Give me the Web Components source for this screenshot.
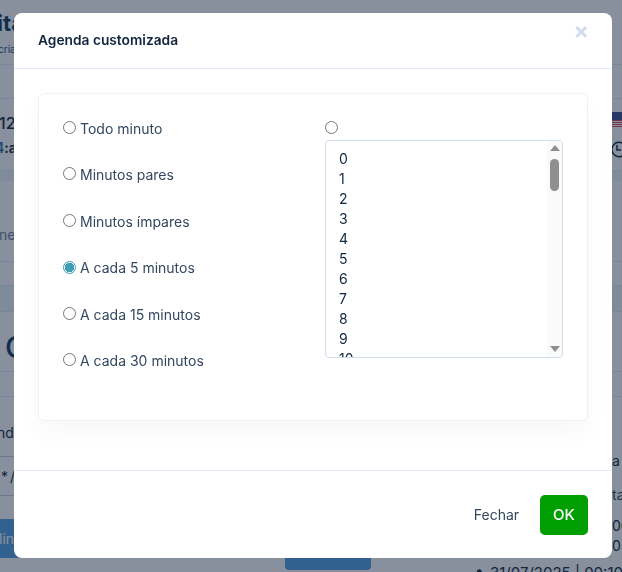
<!DOCTYPE html>
<html lang="pt">
<head>
<meta charset="utf-8">
<title>Agenda customizada</title>
<style>
  html, body { margin: 0; height: 100%; overflow: hidden; background: #fff; }
  body { font-family: Inter, "Liberation Sans", sans-serif; color: #12263f; }
</style>
</head>
<body>

<page-behind>
  <bg-col slot="left">
    <bg-row h="3"></bg-row>
    <bg-row h="62" line>
      <div style="font:700 22px/24px Inter,sans-serif;color:#0f3a63;margin-top:8px;margin-left:-3px">ita</div>
      <div style="font-size:10px;line-height:14px;color:#1e4e7e;margin-top:7px;margin-left:-2px">cria</div>
    </bg-row>
    <bg-row h="34" line></bg-row>
    <bg-row h="72" line>
      <div style="font:500 16px/20px Inter,sans-serif;margin-top:14px;margin-left:-1px">12</div>
      <div style="font:600 14px/20px Inter,sans-serif;margin-top:5px;margin-left:-5px"><span style="color:#2c6fa8">4</span>:a</div>
    </bg-row>
    <bg-row h="10" band></bg-row>
    <bg-row h="81" line>
      <div style="font-size:14px;line-height:18px;color:#6e84a3;margin-top:45px;margin-left:-1px">ne</div>
    </bg-row>
    <bg-row h="24" line></bg-row>
    <bg-row h="26" band line></bg-row>
    <bg-row h="60" line>
      <div style="font:500 30px/34px Inter,sans-serif;margin-top:18px;margin-left:5px;color:#0f3a63">C</div>
    </bg-row>
    <bg-row h="25" line></bg-row>
    <bg-row h="60" line style="border-color:#c3d0e0">
      <div style="font-size:14px;line-height:18px;margin-top:27px;margin-left:-3px">nda</div>
    </bg-row>
    <bg-row h="39" line style="border-color:#c3d0e0">
      <div style="font-size:14px;line-height:20px;margin-top:10px;margin-left:1px;letter-spacing:2px">*/</div>
    </bg-row>
    <bg-row h="23"></bg-row>
    <bg-button w="60" h="39" label="lin" style="margin-left:-1px"></bg-button>
  </bg-col>

  <bg-col slot="center">
    <bg-button w="86" h="12" style="border-radius:0 0 4px 4px"></bg-button>
  </bg-col>

  <bg-col slot="right">
    <bg-row h="3"></bg-row>
    <bg-row h="62" line></bg-row>
    <bg-row h="34" line></bg-row>
    <bg-row h="72" line>
      <flag-icon style="margin:13px 0 0 612px"></flag-icon>
      <clock-icon style="margin:14px 0 0 611px"></clock-icon>
    </bg-row>
    <bg-row h="10" band></bg-row>
    <bg-row h="81" line></bg-row>
    <bg-row h="24" line></bg-row>
    <bg-row h="26" band line></bg-row>
    <bg-row h="60" line></bg-row>
    <bg-row h="25" line></bg-row>
    <bg-row h="176">
      <div style="font-size:14px;line-height:18px;margin:55px 0 0 612px">a</div>
      <div style="font-size:14px;line-height:18px;margin:16px 0 0 612px;color:#33475f">ta</div>
      <div style="font-size:14px;line-height:20px;margin:12px 0 0 612px">00</div>
      <div style="font-size:14px;line-height:20px;margin:0 0 0 612px">05</div>
      <div style="font-size:15px;line-height:18px;margin:8px 0 0 490px;white-space:nowrap;position:relative"><span style="position:absolute;left:-15px;top:-2px">•</span>31/07/2025 | 00:10</div>
    </bg-row>
  </bg-col>
</page-behind>

<modal-dialog heading="Agenda customizada">
  <opt-card>
    <radio-row slot="first">Todo minuto</radio-row>
    <radio-row slot="first" tall>Minutos pares</radio-row>
    <radio-row slot="first" tall>Minutos ímpares</radio-row>
    <radio-row slot="first" checked>A cada 5 minutos</radio-row>
    <radio-row slot="first">A cada 15 minutos</radio-row>
    <radio-row slot="first">A cada 30 minutos</radio-row>
    <radio-row slot="second" bare></radio-row>
    <list-box slot="second" count="11"></list-box>
  </opt-card>
  <foot-button slot="footer">Fechar</foot-button>
  <foot-button slot="footer" kind="ok">OK</foot-button>
</modal-dialog>

<script>
class PageBehind extends HTMLElement {
  constructor() {
    super();
    this.attachShadow({ mode: 'open' }).innerHTML = `
      <style>
        :host { display: grid; grid-template-columns: 285px 190px 1fr; width: 622px; height: 572px; overflow: hidden; background: #fff; }
        .c { min-width: 0; }
        .l { overflow: hidden; }
        .m { padding-top: 558px; }
        .r { margin-left: -475px; width: 622px; }
      </style>
      <div class="c l"><slot name="left"></slot></div>
      <div class="c m"><slot name="center"></slot></div>
      <div class="c r"><slot name="right"></slot></div>
    `;
  }
}

class BgCol extends HTMLElement {
  constructor() {
    super();
    this.attachShadow({ mode: 'open' }).innerHTML = `
      <style>:host { display: flex; flex-direction: column; }</style>
      <slot></slot>
    `;
  }
}

class BgRow extends HTMLElement {
  constructor() {
    super();
    this.attachShadow({ mode: 'open' }).innerHTML = `
      <style>
        :host { display: flex; flex-direction: column; box-sizing: border-box; flex: none; overflow: hidden; }
        :host([line]) { border-bottom: 1px solid #e3ebf6; }
        :host([band]) { background: #f1f4f8; }
      </style>
      <slot></slot>
    `;
  }
  connectedCallback() {
    this.style.height = this.getAttribute('h') + 'px';
  }
}

class BgButton extends HTMLElement {
  constructor() {
    super();
    this.attachShadow({ mode: 'open' }).innerHTML = `
      <style>
        :host { display: flex; align-items: center; flex: none; background: #559fe5; border-radius: 0 4px 4px 0; color: #fff; font-size: 14px; overflow: hidden; }
      </style>
      <span></span>
    `;
  }
  connectedCallback() {
    this.style.width = this.getAttribute('w') + 'px';
    this.style.height = this.getAttribute('h') + 'px';
    this.shadowRoot.querySelector('span').textContent = this.getAttribute('label') || '';
  }
}

class FlagIcon extends HTMLElement {
  constructor() {
    super();
    this.attachShadow({ mode: 'open' }).innerHTML = `
      <style>:host { display: block; width: 10px; height: 15px; line-height: 0; }</style>
      <svg width="10" height="15" viewBox="0 0 10 15">
        <rect width="10" height="15" fill="#fff"/>
        <g fill="#d8485a">
          <rect y="0" width="10" height="1"/><rect y="2" width="10" height="1"/>
          <rect y="4" width="10" height="1"/><rect y="6" width="10" height="1"/>
          <rect y="8" width="10" height="1"/><rect y="10" width="10" height="1"/>
          <rect y="12" width="10" height="1"/><rect y="14" width="10" height="1"/>
        </g>
        <rect width="10" height="8" fill="#3c4f8c"/>
      </svg>
    `;
  }
}

class ClockIcon extends HTMLElement {
  constructor() {
    super();
    this.attachShadow({ mode: 'open' }).innerHTML = `
      <style>:host { display: block; width: 16px; height: 17px; line-height: 0; }</style>
      <svg width="16" height="17" viewBox="0 0 16 17" fill="none" stroke="#12263f" stroke-width="1.5" stroke-linecap="round">
        <circle cx="8" cy="8.5" r="7.2"/>
        <path d="M6 4.5v4.5h3.5"/>
      </svg>
    `;
  }
}

class ModalDialog extends HTMLElement {
  constructor() {
    super();
    this.attachShadow({ mode: 'open' }).innerHTML = `
      <style>
        :host { position: fixed; inset: 0; display: block; background: rgba(15, 33, 57, .5); }
        .dialog { position: absolute; left: 14px; top: 13px; width: 598px; height: 545px; box-sizing: border-box; background: #fff; border-radius: 8px; display: flex; flex-direction: column; overflow: hidden; }
        header { flex: none; height: 56px; box-sizing: border-box; border-bottom: 1px solid #e3ebf6; display: flex; justify-content: space-between; padding: 0 24px; }
        h5 { margin: 17px 0 0; font: 600 13.75px/20px Inter, "Liberation Sans", sans-serif; color: #12263f; }
        .close { margin: 7px -1px 0 0; font: 700 23px/22px Inter, "Liberation Sans", sans-serif; color: #d2ddec; }
        main { flex: 1; padding: 24px; }
        footer { flex: none; height: 88px; box-sizing: border-box; border-top: 1px solid #e3ebf6; display: flex; align-items: center; justify-content: flex-end; gap: 9px; padding: 0 24px 0; }
      </style>
      <div class="dialog">
        <header>
          <h5></h5>
          <div class="close">×</div>
        </header>
        <main><slot></slot></main>
        <footer><slot name="footer"></slot></footer>
      </div>
    `;
  }
  connectedCallback() {
    this.shadowRoot.querySelector('h5').textContent = this.getAttribute('heading');
  }
}

class OptCard extends HTMLElement {
  constructor() {
    super();
    this.attachShadow({ mode: 'open' }).innerHTML = `
      <style>
        :host { display: block; height: 328px; box-sizing: border-box; border: 1px solid #edf2f9; border-radius: 6px; background: #fff; box-shadow: 0 12px 24px rgba(18, 38, 63, .03); padding: 24px; }
        .row { display: grid; grid-template-columns: 1fr 1fr; gap: 24px; }
        .col { display: flex; flex-direction: column; min-width: 0; }
      </style>
      <div class="row">
        <div class="col"><slot name="first"></slot></div>
        <div class="col"><slot name="second"></slot></div>
      </div>
    `;
  }
}

class RadioRow extends HTMLElement {
  constructor() {
    super();
    this.attachShadow({ mode: 'open' }).innerHTML = `
      <style>
        :host { display: flex; align-items: flex-start; height: 46px; font-size: 14px; line-height: 22px; color: #33475f; }
        :host([tall]) { height: 47px; }
        :host([bare]) { height: 22px; }
        :host([checked]) span { margin-top: -1px; }
        input { appearance: none; width: 13px; height: 13px; margin: 3px 4px 0 0; box-sizing: border-box; border: 1px solid #767676; border-radius: 50%; background: #fff; flex: none; }
        input:checked { border-color: #3e9fb4; background: radial-gradient(circle, #3e9fb4 0 4.5px, #fff 5px); }
      </style>
      <input type="radio" tabindex="-1"><span><slot></slot></span>
    `;
  }
  connectedCallback() {
    this.shadowRoot.querySelector('input').checked = this.hasAttribute('checked');
  }
}

class ListBox extends HTMLElement {
  constructor() {
    super();
    this.attachShadow({ mode: 'open' }).innerHTML = `
      <style>
        :host { display: flex; height: 218px; box-sizing: border-box; border: 1px solid #d2ddec; border-radius: 4px; background: #fff; overflow: hidden; }
        .items { flex: 1; padding: 8px 0 0 13px; font-size: 14px; line-height: 20px; color: #12263f; overflow: hidden; }
        .bar { flex: none; width: 15px; background: #fafafa; display: flex; flex-direction: column; align-items: center; }
        .thumb { width: 9px; height: 32px; margin-top: 8px; border-radius: 5px; background: #8f8f8f; }
        .up, .down { width: 0; height: 0; border-left: 5px solid transparent; border-right: 5px solid transparent; }
        .up { margin-top: 4px; border-bottom: 6px solid #8f8f8f; }
        .down { margin-top: auto; margin-bottom: 5px; border-top: 6px solid #8f8f8f; }
      </style>
      <div class="items"></div>
      <div class="bar"><div class="up"></div><div class="thumb"></div><div class="down"></div></div>
    `;
  }
  connectedCallback() {
    const box = this.shadowRoot.querySelector('.items');
    const count = Number(this.getAttribute('count'));
    box.innerHTML = Array.from({ length: count }, (_, i) => `<div>${i}</div>`).join('');
  }
}

class FootButton extends HTMLElement {
  constructor() {
    super();
    this.attachShadow({ mode: 'open' }).innerHTML = `
      <style>
        :host { display: flex; align-items: center; justify-content: center; height: 40px; width: 69px; box-sizing: border-box; border-radius: 5px; font-size: 14px; color: #33475f; }
        :host([kind="ok"]) { width: 48px; background: #009e00; color: #fff; font-weight: 500; font-size: 15px; }
      </style>
      <slot></slot>
    `;
  }
}

customElements.define('page-behind', PageBehind);
customElements.define('bg-col', BgCol);
customElements.define('bg-row', BgRow);
customElements.define('bg-button', BgButton);
customElements.define('flag-icon', FlagIcon);
customElements.define('clock-icon', ClockIcon);
customElements.define('modal-dialog', ModalDialog);
customElements.define('opt-card', OptCard);
customElements.define('radio-row', RadioRow);
customElements.define('list-box', ListBox);
customElements.define('foot-button', FootButton);
</script>
</body>
</html>
